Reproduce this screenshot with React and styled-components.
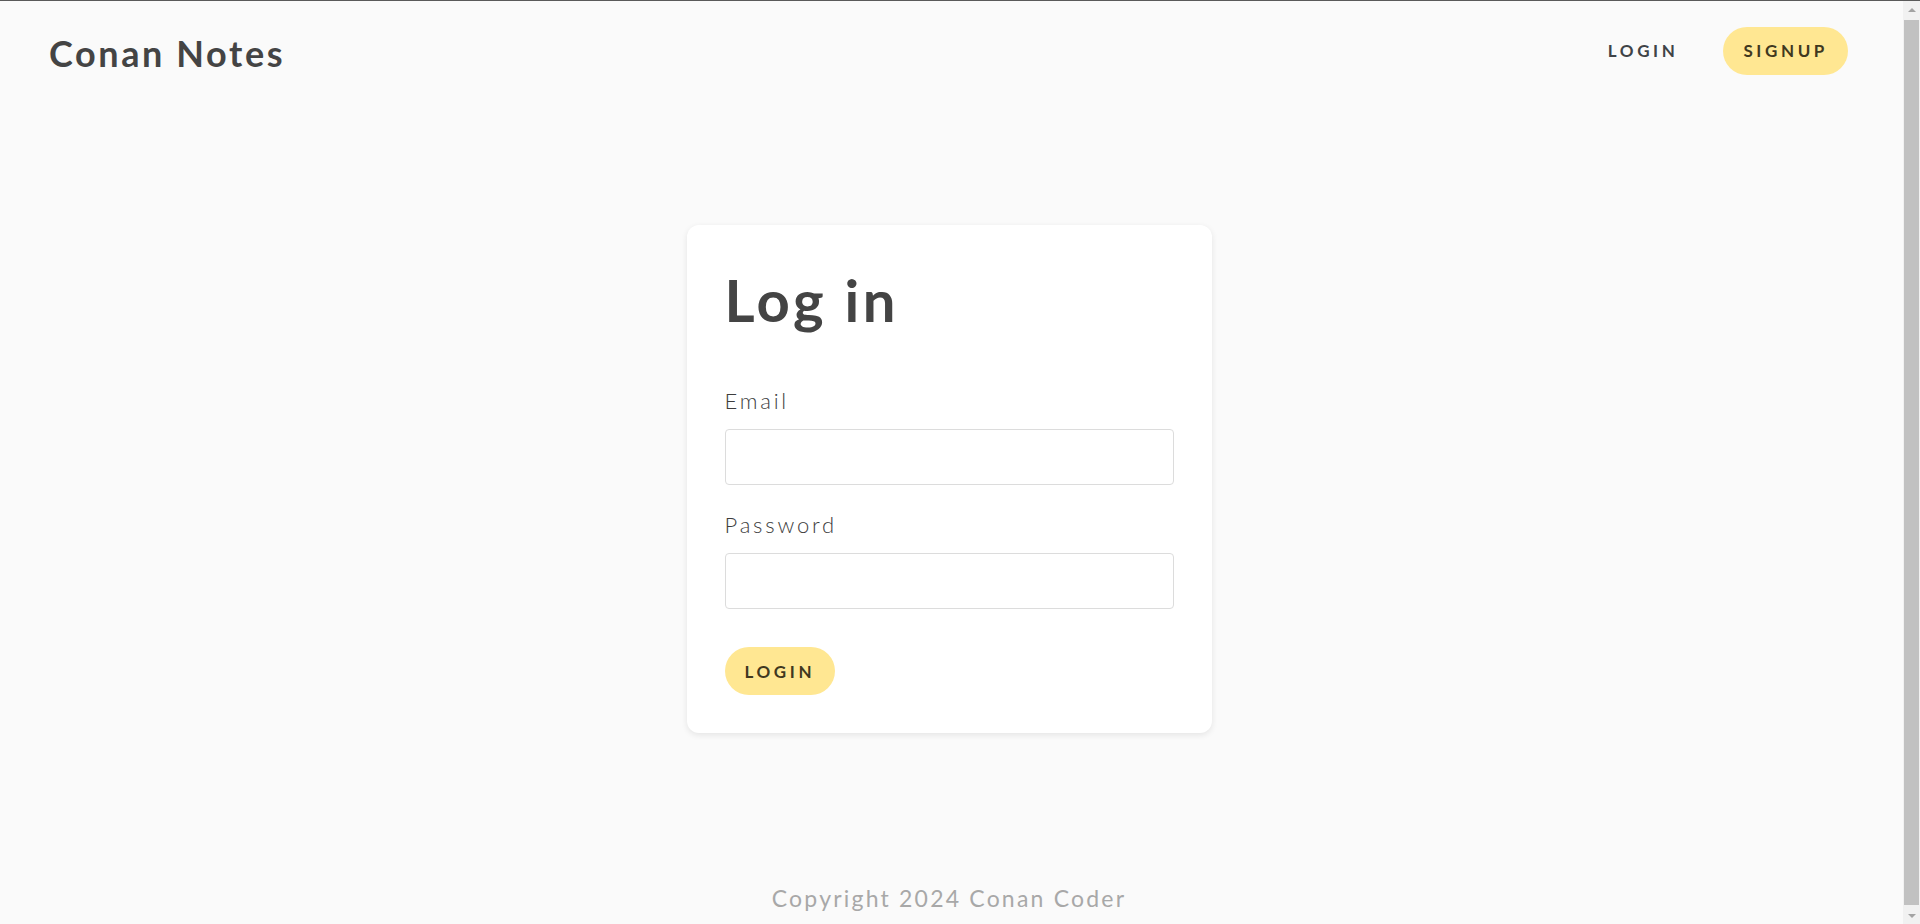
import React from "react";
import styled, { createGlobalStyle } from "styled-components";

const GlobalStyle = createGlobalStyle`
  html {
    border-top: 1px solid #5a5a5a;
    background: #fafafa;
  }
  body {
    margin: 0 17px 0 0;
    background: #fafafa;
    color: #444;
    font-family: "Lato", "Open Sans", sans-serif;
  }
  * { box-sizing: border-box; }
`;

const Page = styled.div`
  display: flex;
  flex-direction: column;
  align-items: stretch;
`;

const Header = styled.header`
  height: 99px;
  display: flex;
  align-items: center;
  justify-content: space-between;
  padding: 0 55px 0 49px;
`;

const Logo = styled.a`
  font-size: 36px;
  font-weight: 700;
  color: #444;
  text-decoration: none;
  letter-spacing: 2.6px;
  margin-top: 4px;
`;

const Nav = styled.nav`
  display: flex;
  align-items: center;
  gap: 25px;
`;

const PillButton = styled.button`
  height: 48px;
  padding: 0 20px;
  border: none;
  border-radius: 24px;
  background: ${(p) => (p.$filled ? "#ffe792" : "transparent")};
  color: ${(p) => (p.$filled ? "#40381f" : "#3f4347")};
  font-family: inherit;
  font-size: 17px;
  font-weight: 700;
  letter-spacing: 3.6px;
  text-transform: uppercase;
  cursor: pointer;
  display: inline-flex;
  align-items: center;
  justify-content: center;
`;

const Main = styled.main`
  display: flex;
  justify-content: center;
  padding: 125px 5px 0 0;
`;

const Card = styled.section`
  width: 525px;
  background: #fff;
  border-radius: 12px;
  box-shadow: 0 2px 6px rgba(0, 0, 0, 0.09);
  padding: 40px 38px 38px;
`;

const Title = styled.h1`
  margin: 0 0 53px;
  font-size: 58px;
  line-height: 1.2;
  font-weight: 700;
  color: #444;
  letter-spacing: 3.4px;
`;

const Field = styled.div`
  display: flex;
  flex-direction: column;
  margin-bottom: ${(p) => p.$gap || 0}px;
`;

const Label = styled.label`
  font-size: 22px;
  line-height: 1.2;
  font-weight: 300;
  color: #3d3d3d;
  letter-spacing: 2.8px;
  margin-bottom: 15px;
`;

const Input = styled.input`
  height: 56px;
  width: 100%;
  border: 1px solid #dcdcdc;
  border-radius: 4px;
  background: #fff;
  padding: 0 14px;
  font-family: inherit;
  font-size: 18px;
  outline: none;
`;

const Actions = styled.div`
  margin-top: 38px;
  display: flex;
`;

const Footer = styled.footer`
  margin-top: 152px;
  padding: 0 5px 20px 0;
  text-align: center;
  font-size: 23px;
  line-height: 1.2;
  color: #a8a8a8;
  letter-spacing: 2.2px;
`;

/* Browser scrollbar as seen in the capture */
const ScrollTrack = styled.div`
  position: fixed;
  top: 1px;
  right: 0;
  bottom: 0;
  width: 17px;
  background: #f1f1f1;
  display: flex;
  flex-direction: column;
  align-items: stretch;
`;

const ScrollArrow = styled.div`
  height: 17px;
  display: flex;
  align-items: center;
  justify-content: center;
  &::before {
    content: "";
    width: 0;
    height: 0;
    border-left: 4px solid transparent;
    border-right: 4px solid transparent;
    ${(p) =>
      p.$down
        ? "border-top: 4px solid #a3a3a3;"
        : "border-bottom: 4px solid #a3a3a3;"}
  }
`;

const ScrollThumb = styled.div`
  flex: 1;
  margin: 2px 1px;
  background: #c1c1c1;
`;

export default function App() {
  return (
    <>
      <GlobalStyle />
      <Page>
        <Header>
          <Logo href="#">Conan Notes</Logo>
          <Nav>
            <PillButton>Login</PillButton>
            <PillButton $filled>Signup</PillButton>
          </Nav>
        </Header>
        <Main>
          <Card>
            <Title>Log in</Title>
            <Field $gap={27}>
              <Label htmlFor="email">Email</Label>
              <Input id="email" type="email" />
            </Field>
            <Field>
              <Label htmlFor="password">Password</Label>
              <Input id="password" type="password" />
            </Field>
            <Actions>
              <PillButton $filled>Login</PillButton>
            </Actions>
          </Card>
        </Main>
        <Footer>Copyright 2024 Conan Coder</Footer>
      </Page>
      <ScrollTrack aria-hidden="true">
        <ScrollArrow />
        <ScrollThumb />
        <ScrollArrow $down />
      </ScrollTrack>
    </>
  );
}
